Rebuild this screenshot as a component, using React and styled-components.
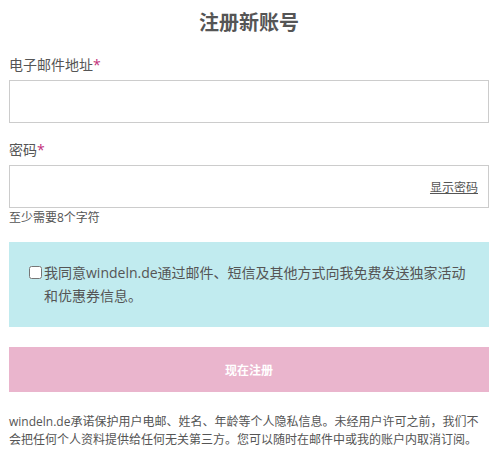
import styled, { createGlobalStyle } from "styled-components";

const GlobalStyle = createGlobalStyle`
  body {
    margin: 0;
    background: #fff;
    font-family: "Open Sans", "Noto Sans CJK SC", sans-serif;
    color: #555;
  }
`;

const Container = styled.div`
  padding: 0 10px 0 9px;
`;

const Title = styled.h1`
  margin: 0;
  padding-top: 10px;
  font-size: 20px;
  line-height: 26px;
  font-weight: 700;
  text-align: center;
  color: #555;
`;

const Form = styled.form`
  display: flex;
  flex-direction: column;
`;

const Label = styled.label`
  display: block;
  font-size: 14px;
  line-height: 20px;
  margin-top: ${(p) => p.$top}px;
  margin-bottom: 5px;
`;

const Star = styled.span`
  color: #c2307a;
`;

const Field = styled.div`
  display: flex;
  align-items: center;
  height: 43px;
  border: 1px solid #ccc;
  box-sizing: border-box;
`;

const Input = styled.input`
  flex: 1;
  height: 100%;
  border: none;
  outline: none;
  padding: 0 10px;
  font-size: 14px;
  background: transparent;
`;

const ShowLink = styled.a`
  font-size: 12px;
  color: #555;
  text-decoration: underline;
  margin-right: 10px;
  cursor: pointer;
`;

const Hint = styled.span`
  margin-top: 2px;
  font-size: 12px;
  line-height: 16px;
`;

const ConsentBox = styled.div`
  margin-top: 16px;
  background: #c1ebef;
  padding: 19px 20px 20px 20px;
`;

const ConsentLabel = styled.label`
  display: flex;
  align-items: flex-start;
  font-size: 14px;
  line-height: 23px;
`;

const Check = styled.input`
  width: 13px;
  height: 13px;
  margin: 5px 2px 0 0;
  flex-shrink: 0;
`;

const Button = styled.button`
  margin-top: 20px;
  height: 45px;
  border: none;
  background: #eab5cd;
  color: #fff;
  font-family: inherit;
  font-size: 12px;
  font-weight: 700;
  cursor: pointer;
`;

const Note = styled.p`
  margin: 21px 0 0;
  font-size: 12px;
  line-height: 18px;
`;

const App = () => {
  return (
    <>
      <GlobalStyle />
      <Container>
        <Title>注册新账号</Title>
        <Form>
          <Label $top={19}>
            电子邮件地址<Star>*</Star>
          </Label>
          <Field>
            <Input type="email" />
          </Field>

          <Label $top={17}>
            密码<Star>*</Star>
          </Label>
          <Field>
            <Input type="password" />
            <ShowLink>显示密码</ShowLink>
          </Field>
          <Hint>至少需要8个字符</Hint>

          <ConsentBox>
            <ConsentLabel>
              <Check type="checkbox" />
              <span>我同意windeln.de通过邮件、短信及其他方式向我免费发送独家活动和优惠券信息。</span>
            </ConsentLabel>
          </ConsentBox>

          <Button type="button">现在注册</Button>
        </Form>
        <Note>
          windeln.de承诺保护用户电邮、姓名、年龄等个人隐私信息。未经用户许可之前，我们不会把任何个人资料提供给任何无关第三方。您可以随时在邮件中或我的账户内取消订阅。
        </Note>
      </Container>
    </>
  );
};

export default App;
